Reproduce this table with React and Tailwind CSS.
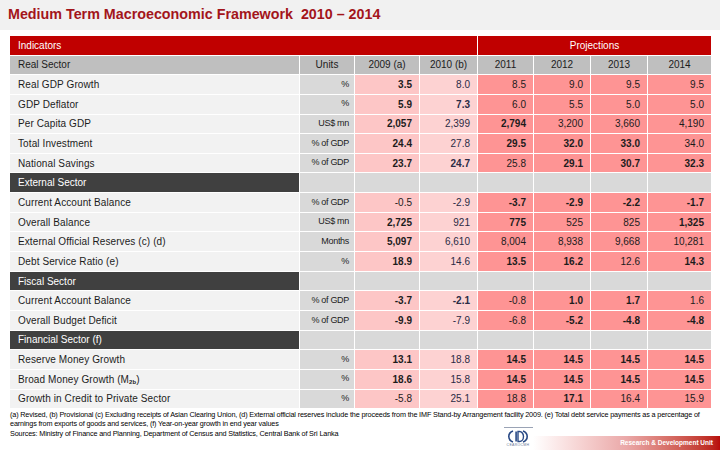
import React from 'react';

const rows = [
  { label: 'Real GDP Growth', unit: '%', v: ['3.5', '8.0', '8.5', '9.0', '9.5', '9.5'], b: '100000' },
  { label: 'GDP Deflator', unit: '%', v: ['5.9', '7.3', '6.0', '5.5', '5.0', '5.0'], b: '110000' },
  { label: 'Per Capita GDP', unit: 'US$ mn', v: ['2,057', '2,399', '2,794', '3,200', '3,660', '4,190'], b: '101000' },
  { label: 'Total Investment', unit: '% of GDP', v: ['24.4', '27.8', '29.5', '32.0', '33.0', '34.0'], b: '101110' },
  { label: 'National Savings', unit: '% of GDP', v: ['23.7', '24.7', '25.8', '29.1', '30.7', '32.3'], b: '110111' },
  { section: 'External Sector' },
  { label: 'Current Account Balance', unit: '% of GDP', v: ['-0.5', '-2.9', '-3.7', '-2.9', '-2.2', '-1.7'], b: '001111' },
  { label: 'Overall Balance', unit: 'US$ mn', v: ['2,725', '921', '775', '525', '825', '1,325'], b: '101001' },
  { label: 'External Official Reserves (c) (d)', unit: 'Months', v: ['5,097', '6,610', '8,004', '8,938', '9,668', '10,281'], b: '100000' },
  { label: 'Debt Service Ratio (e)', unit: '%', v: ['18.9', '14.6', '13.5', '16.2', '12.6', '14.3'], b: '101101' },
  { section: 'Fiscal Sector' },
  { label: 'Current Account Balance', unit: '% of GDP', v: ['-3.7', '-2.1', '-0.8', '1.0', '1.7', '1.6'], b: '110110' },
  { label: 'Overall Budget Deficit', unit: '% of GDP', v: ['-9.9', '-7.9', '-6.8', '-5.2', '-4.8', '-4.8'], b: '100111' },
  { section: 'Financial Sector (f)' },
  { label: 'Reserve Money Growth', unit: '%', v: ['13.1', '18.8', '14.5', '14.5', '14.5', '14.5'], b: '101111' },
  { label: 'Broad Money Growth', sub: '2b', unit: '%', v: ['18.6', '15.8', '14.5', '14.5', '14.5', '14.5'], b: '101111' },
  { label: 'Growth in Credit to Private Sector', unit: '%', v: ['-5.8', '25.1', '18.8', '17.1', '16.4', '15.9'], b: '000100' },
];

const valueBg = ['bg-[#fdc6c6]', 'bg-[#fdd2d2]', 'bg-[#fe9494]', 'bg-[#fe9494]', 'bg-[#fe9494]', 'bg-[#fe9494]'];

function Logo() {
  return (
    <div className="flex flex-col items-center w-[30px]">
      <div className="w-[29px] h-px bg-[#9aa3b5]" />
      <svg width="22" height="13" viewBox="0 0 22 13" className="mt-[2px]">
        <path d="M6 1 A7 6 0 0 0 6 12" fill="none" stroke="#2a4a86" strokeWidth="1.6" />
        <path d="M16 1 A7 6 0 0 1 16 12" fill="none" stroke="#2a4a86" strokeWidth="1.6" />
        <rect x="8.3" y="1.5" width="1.6" height="10" fill="#2a4a86" />
        <path d="M11 1.5 h1.5 a4 5 0 0 1 0 10 h-1.5 z" fill="none" stroke="#2a4a86" strokeWidth="1.4" />
      </svg>
      <div className="text-[3.5px] leading-[5px] text-[#6b7a99] tracking-[0.3px]">CEAROCMH</div>
    </div>
  );
}

export default function App() {
  return (
    <div className="w-[720px] h-[450px] overflow-hidden bg-white text-[#1c1c1c]" style={{ fontFamily: '"Liberation Sans", Arial, sans-serif' }}>
      {/* Title */}
      <div className="h-[30px] bg-[#f1f1f1] pl-[8px] flex items-center">
        <h1 className="text-[14.3px] font-bold text-[#a3151b] whitespace-pre">Medium Term Macroeconomic Framework  2010 – 2014</h1>
      </div>

      {/* Table */}
      <div className="ml-[10px] mt-[6px] w-[699px] grid grid-cols-[289px_54px_64px_57px_55px_56px_56px_63px] auto-rows-[18.65px] gap-px bg-white text-[10px]">
        <div className="col-span-4 bg-[#c00000] text-white flex items-center pl-[8px]">Indicators</div>
        <div className="col-span-4 bg-[#c00000] text-white flex items-center justify-center">Projections</div>

        <div className="bg-[#bfbfbf] flex items-center pl-[8px]">Real Sector</div>
        <div className="bg-[#bfbfbf] flex items-center justify-center">Units</div>
        {['2009 (a)', '2010 (b)', '2011', '2012', '2013', '2014'].map((y) => (
          <div key={y} className="bg-[#bfbfbf] flex items-center justify-center">{y}</div>
        ))}

        {rows.map((r, i) =>
          r.section ? (
            <React.Fragment key={i}>
              <div className="bg-[#404040] text-white flex items-center pl-[8px]">{r.section}</div>
              {[0, 1, 2, 3, 4, 5, 6].map((k) => (
                <div key={k} className="bg-[#d9d9d9]" />
              ))}
            </React.Fragment>
          ) : (
            <React.Fragment key={i}>
              <div className="bg-[#f2f2f2] flex items-center pl-[8px] tracking-[0.1px]">
                {r.label}
                {r.sub && (
                  <span>
                    &nbsp;(M<sub className="text-[6px] font-bold">{r.sub}</sub>)
                  </span>
                )}
              </div>
              <div className="bg-[#d9d9d9] flex items-center justify-end pr-[5px] text-[9px] tracking-[-0.3px]">{r.unit}</div>
              {r.v.map((v, k) => (
                <div
                  key={k}
                  className={`${valueBg[k]} flex items-center justify-end pr-[7px] ${r.b[k] === '1' ? 'font-bold' : ''} ${k === 1 ? 'text-[#2b2b45]' : ''}`}
                >
                  {v}
                </div>
              ))}
            </React.Fragment>
          )
        )}
      </div>

      {/* Footnotes */}
      <div className="mt-[3px] px-[10px] text-[7.25px] leading-[8.5px] tracking-[-0.15px] whitespace-nowrap text-black">
        (a) Revised, (b) Provisional (c) Excluding receipts of Asian Clearing Union, (d) External official reserves include the proceeds from the IMF Stand-by Arrangement facility 2009. (e) Total debt service payments as a percentage of
      </div>
      <div className="flex items-start">
        <div className="pl-[10px] w-[503px] text-[7.25px] leading-[8.5px] tracking-[-0.15px] whitespace-nowrap text-black">
          <div>earnings from exports of goods and services, (f) Year-on-year growth in end year values</div>
          <div className="mt-[2px]">Sources: Ministry of Finance and Planning, Department of Census and Statistics, Central Bank of Sri Lanka</div>
        </div>
        <div className="mt-[7px]">
          <Logo />
        </div>
        <div className="flex-1 mt-[16px] h-[14px] bg-gradient-to-r from-white via-[#eaa8a8] to-[#b80a0a] flex items-center justify-end pr-[7px]">
          <span className="text-[6.5px] font-bold text-white">Research &amp; Development Unit</span>
        </div>
      </div>
    </div>
  );
}
